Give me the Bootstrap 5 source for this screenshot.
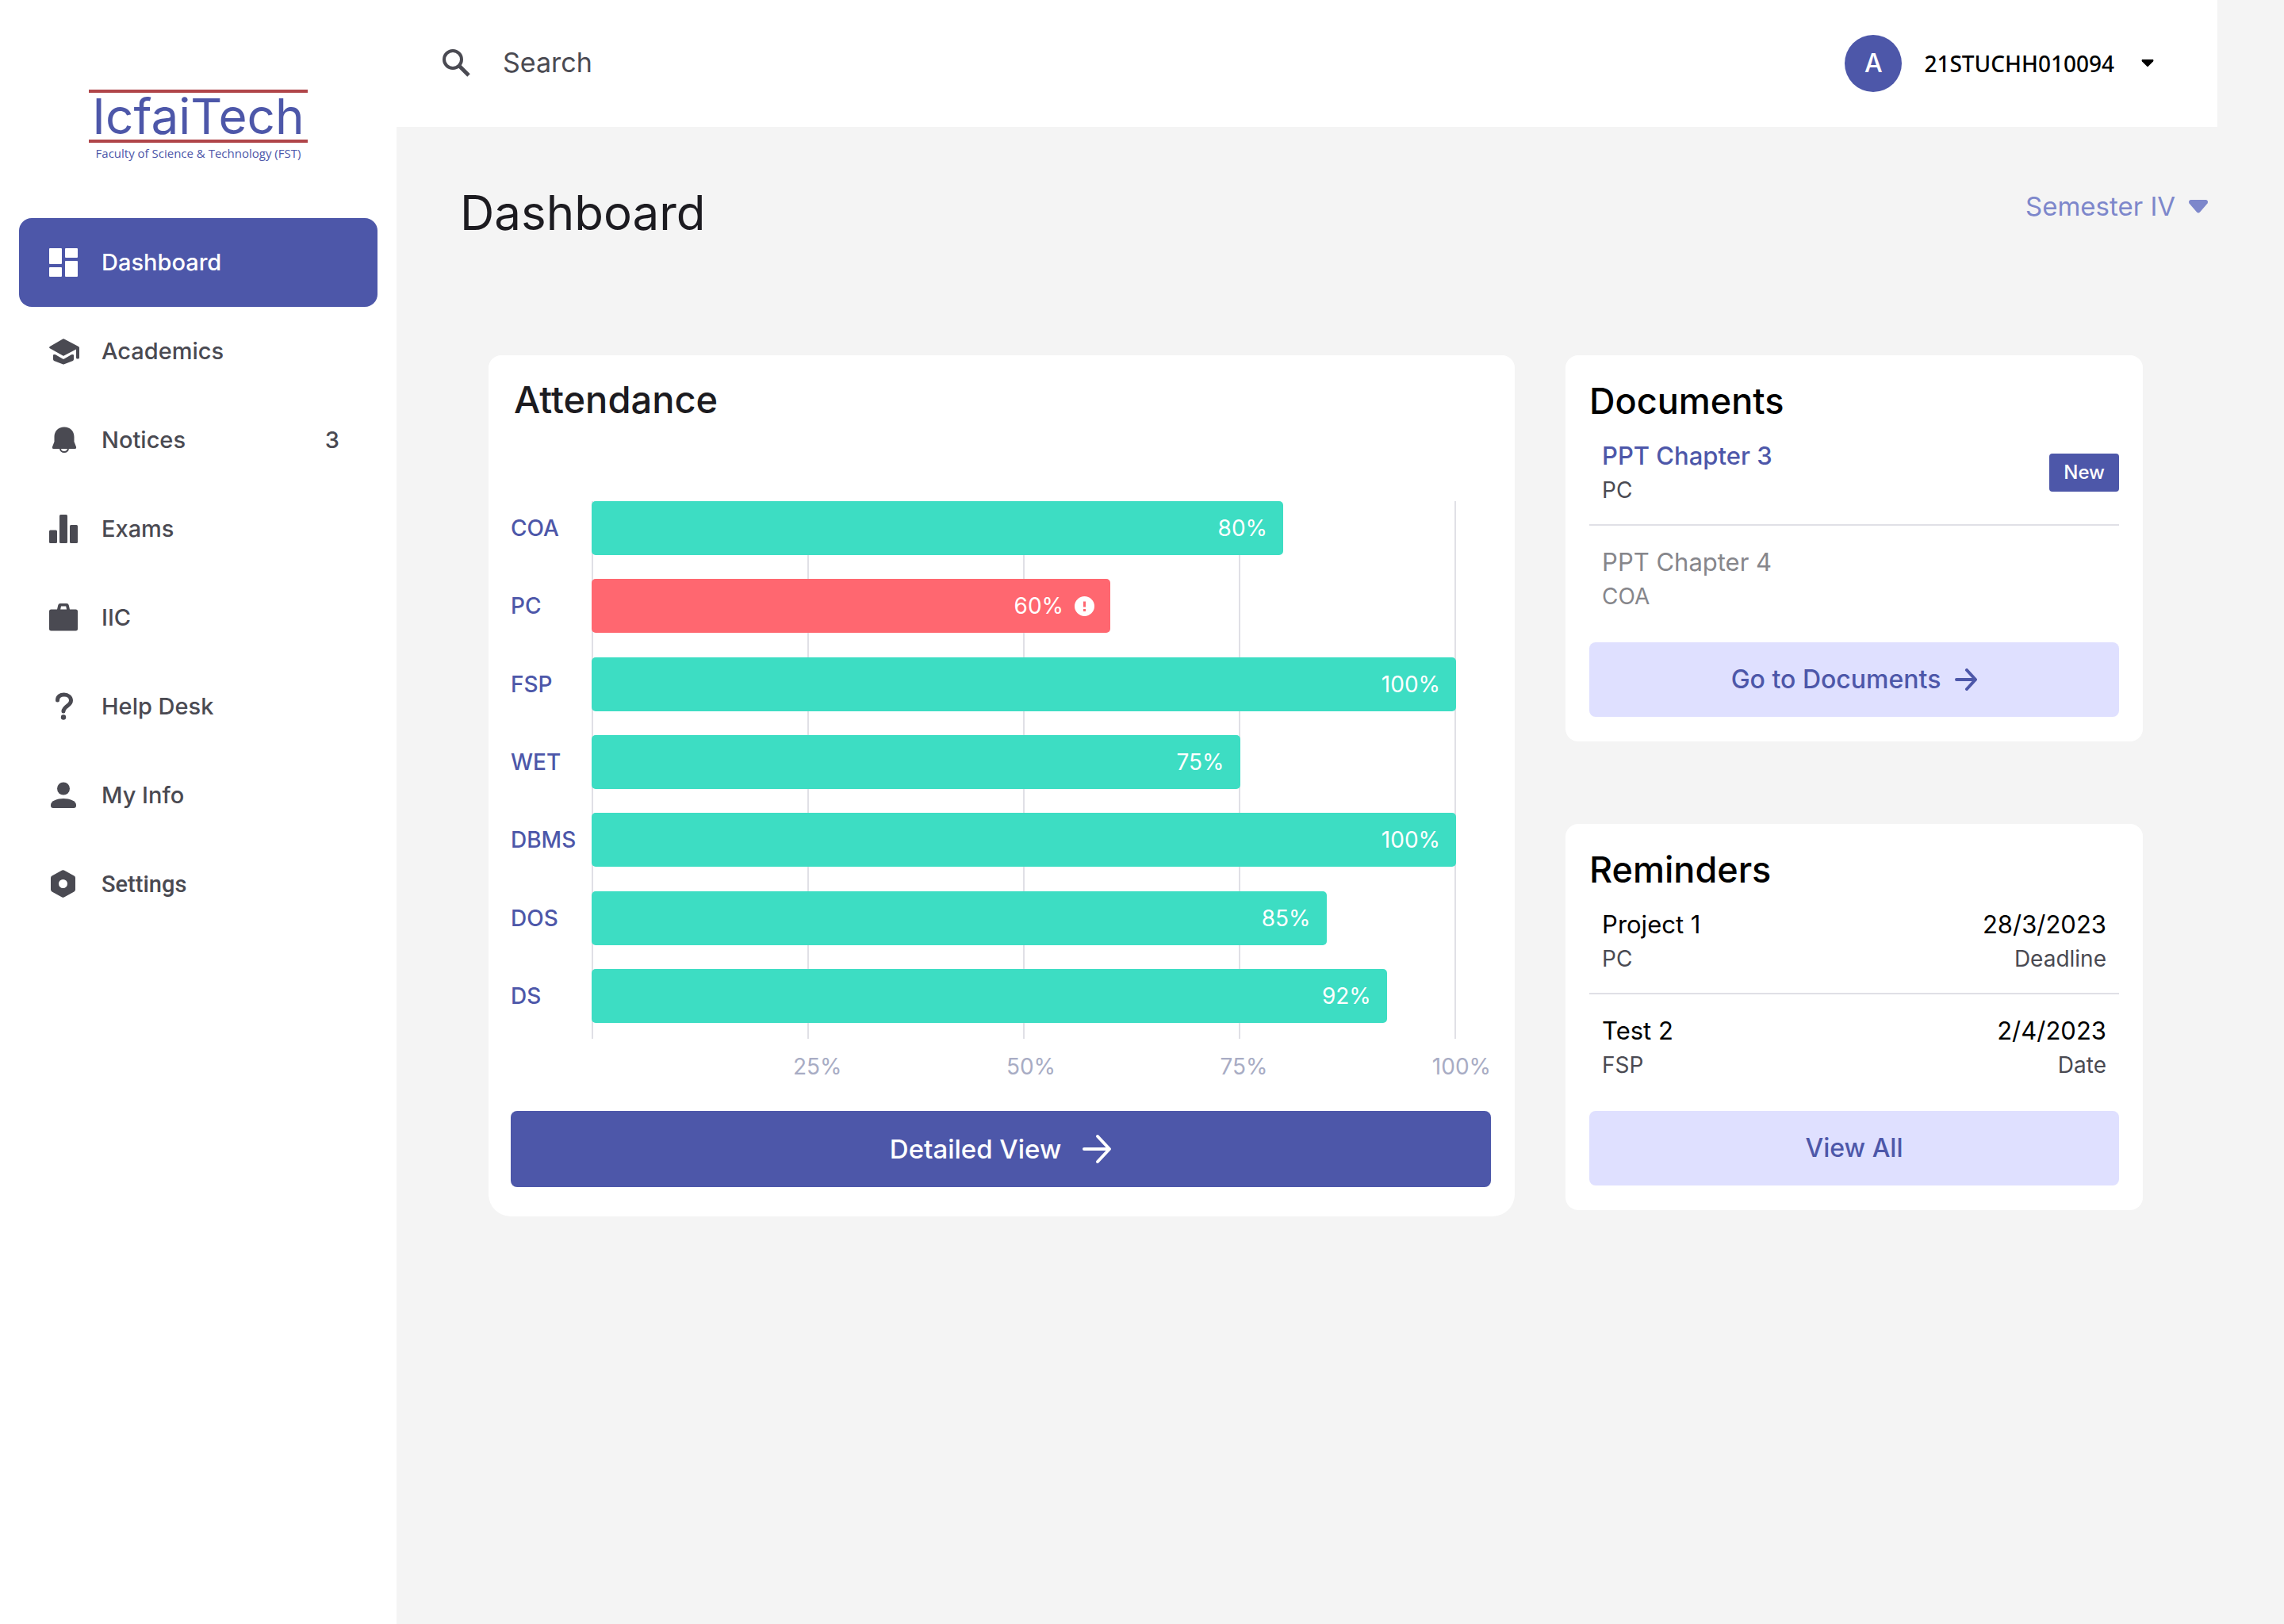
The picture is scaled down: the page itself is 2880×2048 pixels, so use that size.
<!DOCTYPE html>
<html lang="en">
<head>
<meta charset="utf-8">
<meta name="viewport" content="width=device-width, initial-scale=1">
<title>IcfaiTech Dashboard</title>
<link href="https://cdn.jsdelivr.net/npm/bootstrap@5.3.0/dist/css/bootstrap.min.css" rel="stylesheet">
<style>
  :root { --brand: #4d57a9; --brand-soft: #dfe0ff; --ink: #1c1b20; --ink-soft: #4a4a52; --rule: #e0e0e6; --good: #3dddc3; --bad: #ff6770; }
  body { background: #f4f4f4; font-family: Inter, sans-serif; font-size: 28px; line-height: 40px; color: #000; }
  svg { flex: none; fill: currentColor; }

  .side { flex: 0 0 500px; padding: 113px 24px 0; }
  .brand-box { width: 276px; color: var(--brand); text-decoration: none; margin-bottom: 68px; }
  .brand-name { border-top: 4px solid #b04549; border-bottom: 4px solid #b04549; font-size: 62px; line-height: 59px; text-align: center; }
  .brand-sub { font-family: "Open Sans", sans-serif; font-size: 15px; line-height: 27px; text-align: center; white-space: nowrap; }
  .side .nav-link { height: 112px; gap: 28px; padding: 0 48px 0 36px; border-radius: 16px; color: var(--ink-soft); font-size: 29px; font-weight: 500; }
  .side .nav-link.active { background: var(--brand); color: #fff; }
  .roboto { font-family: Roboto, sans-serif; }

  .topbar { height: 160px; margin-right: 84px; padding: 0 80px 0 58px; color: var(--ink-soft); }
  .search-box { gap: 40px; }
  .search-field, .search-field:focus { font-size: 34px; line-height: 46px; padding: 0 0 2px; color: var(--ink-soft); border: 0; background: none; box-shadow: none; }
  .search-field::placeholder { color: var(--ink-soft); opacity: 1; }
  .user-btn { font-family: "Noto Sans", sans-serif; font-size: 28px; font-weight: 500; color: #000; border: 0; }
  .user-id { margin: 0 34px 0 28px; }
  .avatar { width: 72px; height: 72px; background: var(--brand); color: #fff; font-size: 32px; font-family: Inter, sans-serif; }

  .title-row { padding: 66px 96px 0 80px; height: 288px; }
  .page-title { font-size: 60px; line-height: 84px; font-weight: 400; color: var(--ink); }
  .term-pick { margin-top: 10px; color: #7d87cb; }
  .term-pick select { appearance: none; border: 0; background: none; color: inherit; font-size: 33px; line-height: 48px; padding: 0 40px 0 0; }
  .term-pick svg { right: 0; top: 16px; pointer-events: none; }

  .panels { display: grid; grid-template-columns: minmax(0, 16fr) minmax(0, 9fr); gap: 64px; padding: 0 178px 64px 116px; }
  .col-slim { gap: 104px; }
  .panel { border: 0; border-radius: 16px; padding: 28px 30px 31px; }
  .panel-title { font-size: 45px; line-height: 60px; font-weight: 500; margin: 0; color: #000; }
  .panel-wide { padding: 26px 30px 37px 28px; border-radius: 16px 16px 28px 28px; }
  .panel-wide .panel-title { font-size: 47px; padding-left: 4px; color: var(--ink); }

  .chart { margin-top: 98px; }
  .chart-labels { width: 102px; height: 658px; color: var(--brand); font-weight: 500; }
  .chart-labels div { line-height: 68px; }
  .plot { margin-right: 44px; padding-bottom: 20px; }
  .plot-lines i { width: 2px; background: var(--rule); }
  .plot-bars { height: 658px; }
  .bar { height: 68px; border-radius: 5px; background: var(--good); color: #fff; padding-right: 20px; gap: 14px; }
  .bar.low { background: var(--bad); }
  .ticks { margin: 15px 0 36px 356px; color: #a8acc4; }
  .btn-panel { font-size: 32px; line-height: 48px; font-weight: 500; border: 0; border-radius: 8px; height: 94px; }
  .btn-soft, .btn-soft:hover { background: var(--brand-soft); color: var(--brand); gap: 18px; }
  .btn-main, .btn-main:hover { background: var(--brand); color: #fff; font-size: 33px; height: 96px; gap: 26px; }

  .rows { margin: 17px 0 37px; }
  .rows li { padding: 24px 16px 22px; border-bottom: 2px solid var(--rule); }
  .rows li:first-child { padding-top: 0; }
  .rows li:last-child { padding-bottom: 0; border: 0; }
  .row-head { font-size: 31px; line-height: 44px; text-decoration: none; color: #000; display: block; }
  .row-sub { font-size: 28px; line-height: 42px; color: var(--ink-soft); }
  .fresh { color: var(--brand); font-weight: 500; }
  .seen, .seen .row-head, .seen .row-sub { color: #86868b; }
  .tag-new { background: var(--brand); font-size: 24px; line-height: 48px; font-weight: 500; padding: 0 18px; border-radius: 4px; margin-right: -16px; }
</style>
<script src="https://cdn.jsdelivr.net/npm/bootstrap@5.3.0/dist/js/bootstrap.bundle.min.js"></script>
</head>
<body>
<div class="d-flex min-vh-100">
  <aside class="side bg-white">
    <a href="#" class="brand-box d-block mx-auto">
      <div class="brand-name">IcfaiTech</div>
      <div class="brand-sub">Faculty of Science &amp; Technology (FST)</div>
    </a>
    <nav class="nav nav-pills flex-column" aria-label="Main">
      <a href="#" class="nav-link active d-flex align-items-center" aria-current="page">
        <svg width="40" height="36" viewBox="0 0 40 36"><rect x="2" width="16" height="20" rx="1"/><rect x="22" width="16" height="12" rx="1"/><rect x="2" y="24" width="16" height="12" rx="1"/><rect x="22" y="16" width="16" height="20" rx="1"/></svg>
        Dashboard</a>
      <a href="#" class="nav-link d-flex align-items-center">
        <svg width="40" height="36" viewBox="0 0 40 36"><path d="M20 2 39 12Q40 12.500 40 13.500V26Q40 27.500 38.500 27.500H37.500Q36 27.500 36 26V15.500L20.700 23.600Q20 24 19.300 23.600L2.800 14.300Q1.200 13.200 2.800 12L19.200 2.400Q20 1.900 20.800 2.400Z"/><path d="M7 22.500Q8.500 21.500 10 22.300L19 27.500Q20 28 21 27.500L30 22.300Q31.500 21.500 33 22.500V28Q33 29.300 32 29.900L21 34.200Q20 34.600 19 34.200L8 29.900Q7 29.300 7 28Z"/></svg>
        Academics</a>
      <a href="#" class="nav-link d-flex align-items-center">
        <svg width="40" height="36" viewBox="0 0 40 36"><path d="M8.500 14C8.500 6.500 13.500 1.500 21 1.500S33.500 6.500 33.500 14V20L36 26.500Q36.500 29 34.500 29H7.500Q5.500 29 6 26.500L8.500 20Z"/><path d="M16 28.500a5 4.500 0 0 0 10 0" fill="none" stroke="currentColor" stroke-width="2"/></svg>
        Notices <span class="ms-auto">3</span></a>
      <a href="#" class="nav-link d-flex align-items-center">
        <svg width="40" height="36" viewBox="0 0 40 36"><rect x="2" y="19.500" width="10" height="16.500" rx="1.500"/><rect x="15" width="10" height="36" rx="1.500"/><rect x="28" y="13" width="10" height="23" rx="1.500"/></svg>
        Exams</a>
      <a href="#" class="nav-link d-flex align-items-center">
        <svg width="40" height="36" viewBox="0 0 40 36"><path fill-rule="evenodd" d="M4.500 7.500H12L13.300 2Q13.800 0 16 0H24Q26.200 0 26.700 2L28 7.500H35.500Q38 7.500 38 10V32Q38 34.500 35.500 34.500H4.500Q2 34.500 2 32V10Q2 7.500 4.500 7.500ZM17 3.500 16.200 7.500H24L23.200 3.500Z"/></svg>
        IIC</a>
      <a href="#" class="nav-link d-flex align-items-center">
        <svg width="40" height="36" viewBox="0 0 40 36"><path d="M12.500 10C12.500 5.500 16 3 20.800 3S29.500 6 29.500 10.500C29.500 17 20.500 17.500 20 24" fill="none" stroke="currentColor" stroke-width="5" stroke-linecap="round"/><circle cx="20" cy="31.500" r="3.200"/></svg>
        Help Desk</a>
      <a href="#" class="nav-link d-flex align-items-center">
        <svg width="40" height="36" viewBox="0 0 40 36"><circle cx="20" cy="9.500" r="8"/><path d="M4 30C4 25 12 22 20 22S36 25 36 30V31Q36 34 33 34H7Q4 34 4 31Z"/></svg>
        My Info</a>
      <a href="#" class="nav-link d-flex align-items-center roboto">
        <svg width="40" height="36" viewBox="0 0 40 36"><path fill-rule="evenodd" d="M18.200.6Q19.500-.2 20.800.6L33.500 7.600Q35 8.500 35 10V25Q35 26.500 33.500 27.400L20.800 34.500Q19.500 35.200 18.200 34.500L5.500 27.400Q4 26.500 4 25V10Q4 8.500 5.500 7.600ZM19.500 12a5.500 5.500 0 1 0 0 11a5.500 5.500 0 0 0 0-11Z"/></svg>
        Settings</a>
    </nav>
  </aside>

  <div class="flex-grow-1">
    <header class="topbar bg-white d-flex align-items-center justify-content-between">
      <div class="search-box d-flex align-items-center flex-grow-1">
        <label for="search" class="d-flex" aria-label="Search"><svg width="36" height="36" viewBox="0 0 36 36" fill="none" stroke="currentColor"><circle cx="13" cy="13" r="11" fill="none" stroke-width="4"/><path d="M21 21 33 33" stroke-width="5"/></svg></label>
        <input id="search" type="search" class="form-control search-field w-50" placeholder="Search">
      </div>
      <button type="button" class="btn user-btn d-flex align-items-center p-0">
        <span class="avatar rounded-circle d-flex align-items-center justify-content-center">A</span>
        <span class="user-id">21STUCHH010094</span>
        <svg width="16" height="12" viewBox="0 0 16 12"><path d="M1 1H15Q16 2 15 3.500L9 9.500Q8 10.500 7 9.500L1 3.500Q0 2 1 1Z"/></svg>
      </button>
    </header>

    <main>
      <div class="title-row d-flex align-items-start justify-content-between">
        <h1 class="page-title m-0">Dashboard</h1>
        <div class="term-pick position-relative">
          <select aria-label="Semester"><option>Semester IV</option></select>
          <svg class="position-absolute" width="24" height="18" viewBox="0 0 24 18"><path d="M2 0H22Q25 1 23.500 4.500L14 15.500Q12 17.500 10 15.500L.5 4.500Q-1 1 2 0Z"/></svg>
        </div>
      </div>

      <div class="panels align-items-start">
        <section class="card panel panel-wide">
          <h2 class="panel-title">Attendance</h2>
          <div class="chart d-flex">
            <div class="chart-labels d-flex flex-column justify-content-between">
              <div>COA</div><div>PC</div><div>FSP</div><div>WET</div><div>DBMS</div><div>DOS</div><div>DS</div>
            </div>
            <div class="plot position-relative flex-grow-1">
              <div class="plot-lines position-absolute top-0 start-0 w-100 h-100 d-flex justify-content-between"><i></i><i></i><i></i><i></i><i></i></div>
              <div class="plot-bars position-relative d-flex flex-column justify-content-between">
                <div class="bar d-flex align-items-center justify-content-end" style="width:80%">80%</div>
                <div class="bar low d-flex align-items-center justify-content-end" style="width:60%">60%
                  <svg width="25" height="25" viewBox="0 0 25 25"><path fill-rule="evenodd" d="M12.500 0a12.500 12.500 0 1 0 0 25a12.500 12.500 0 0 0 0-25ZM11 6.500H14V13.500H11ZM11 16H14V19H11Z"/></svg></div>
                <div class="bar d-flex align-items-center justify-content-end" style="width:100%">100%</div>
                <div class="bar d-flex align-items-center justify-content-end" style="width:75%">75%</div>
                <div class="bar d-flex align-items-center justify-content-end" style="width:100%">100%</div>
                <div class="bar d-flex align-items-center justify-content-end" style="width:85%">85%</div>
                <div class="bar d-flex align-items-center justify-content-end" style="width:92%">92%</div>
              </div>
            </div>
          </div>
          <div class="ticks d-flex justify-content-between"><span>25%</span><span>50%</span><span>75%</span><span>100%</span></div>
          <button type="button" class="btn btn-panel btn-main d-flex align-items-center justify-content-center">Detailed View
            <svg width="38" height="38" viewBox="0 0 38 38"><path d="M3 19H34M20 3 35 19 20 35" fill="none" stroke="currentColor" stroke-width="4" stroke-linecap="round" stroke-linejoin="round"/></svg></button>
        </section>

        <div class="col-slim d-flex flex-column">
          <section class="card panel">
            <h2 class="panel-title">Documents</h2>
            <ul class="rows list-unstyled">
              <li class="d-flex align-items-center justify-content-between">
                <div><a href="#" class="row-head fresh">PPT Chapter 3</a><div class="row-sub">PC</div></div>
                <span class="badge tag-new">New</span>
              </li>
              <li class="seen"><a href="#" class="row-head">PPT Chapter 4</a><div class="row-sub">COA</div></li>
            </ul>
            <button type="button" class="btn btn-panel btn-soft d-flex align-items-center justify-content-center">Go to Documents
              <svg width="28" height="28" viewBox="0 0 28 28"><path d="M2 14H25M15 2 26 14 15 26" fill="none" stroke="currentColor" stroke-width="4" stroke-linecap="round" stroke-linejoin="round"/></svg></button>
          </section>
          <section class="card panel">
            <h2 class="panel-title">Reminders</h2>
            <ul class="rows list-unstyled">
              <li class="d-flex justify-content-between">
                <div><div class="row-head">Project 1</div><div class="row-sub">PC</div></div>
                <div class="text-end"><div class="row-head">28/3/2023</div><div class="row-sub">Deadline</div></div>
              </li>
              <li class="d-flex justify-content-between">
                <div><div class="row-head">Test 2</div><div class="row-sub">FSP</div></div>
                <div class="text-end"><div class="row-head">2/4/2023</div><div class="row-sub">Date</div></div>
              </li>
            </ul>
            <button type="button" class="btn btn-panel btn-soft">View All</button>
          </section>
        </div>
      </div>
    </main>
  </div>
</div>
</body>
</html>
